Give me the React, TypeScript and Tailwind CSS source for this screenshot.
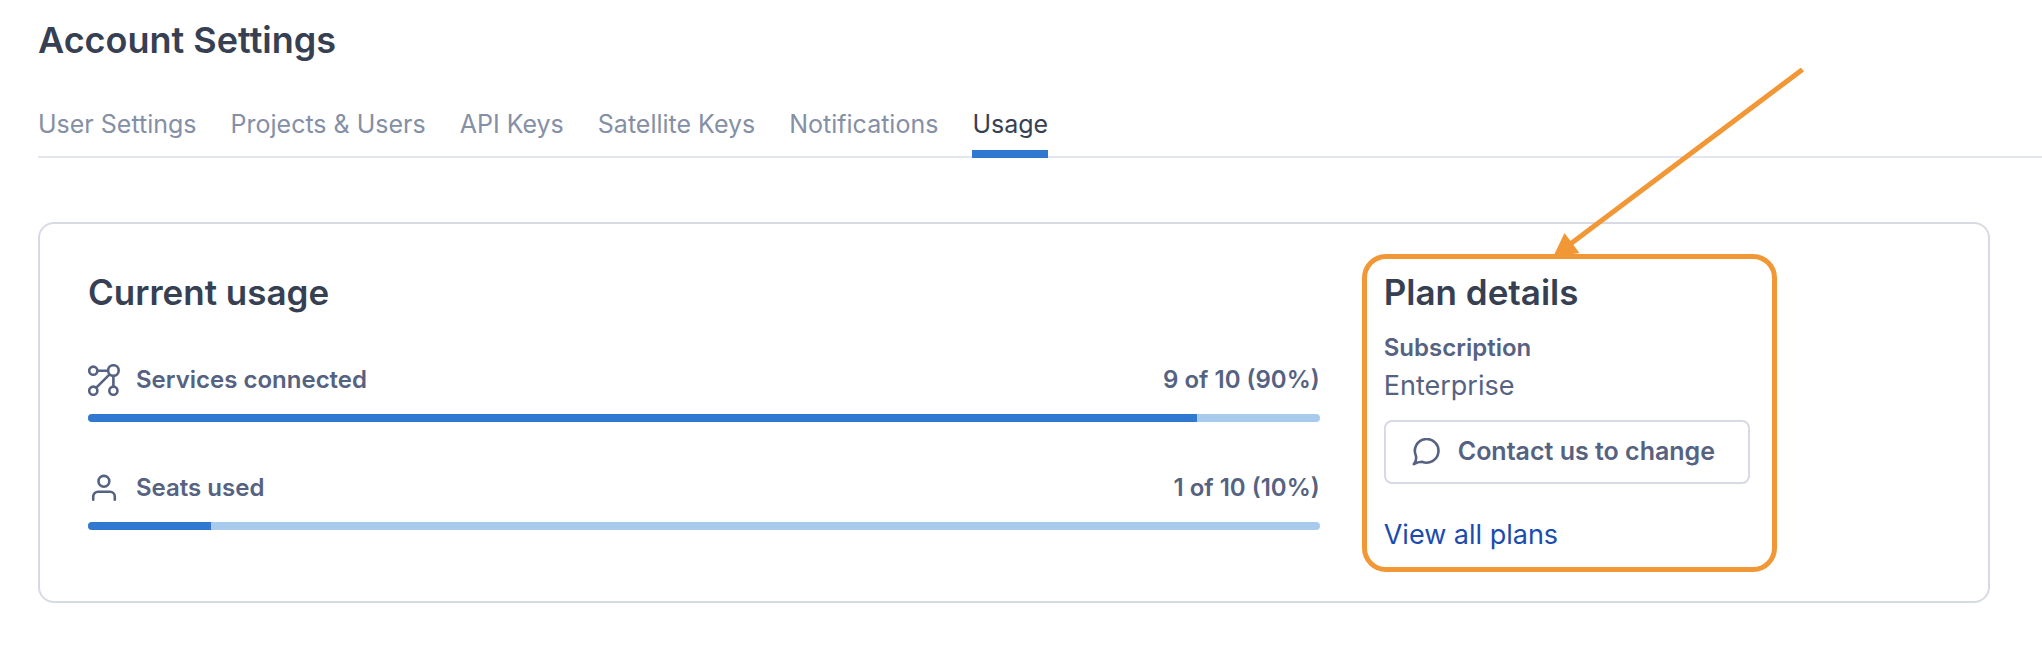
import React from "react";

const tabs = ["User Settings", "Projects & Users", "API Keys", "Satellite Keys", "Notifications", "Usage"];

function ServicesIcon() {
  return (
    <svg width="32" height="32" viewBox="0 0 32 32" fill="none" stroke="currentColor" strokeWidth="2.6" aria-hidden="true">
      <circle cx="5.3" cy="6.7" r="4.1" />
      <circle cx="25.4" cy="6.5" r="5.3" />
      <circle cx="5.3" cy="26.7" r="4.1" />
      <circle cx="25.4" cy="26.7" r="4.1" />
      <path d="M9.5 6.7H20M21.6 10.4L8.3 23.7M25.4 12v10.5" />
    </svg>
  );
}

function PersonIcon() {
  return (
    <svg width="32" height="32" viewBox="0 0 32 32" fill="none" stroke="currentColor" strokeWidth="2.6" strokeLinecap="round" aria-hidden="true">
      <circle cx="15.9" cy="9.3" r="5.4" />
      <path d="M5.2 27.8v-3.3a4.8 4.8 0 0 1 4.8-4.8h12a4.8 4.8 0 0 1 4.8 4.8v3.3" />
    </svg>
  );
}

function ChatIcon() {
  return (
    <svg width="28" height="28" viewBox="0 0 28 28" fill="none" stroke="currentColor" strokeWidth="2.6" strokeLinejoin="round" aria-hidden="true">
      <path d="M1.8 26.1Q5 22.500 3.900 17.700A11.800 11.800 0 1 1 10 23.700Q6 23.700 1.800 26.100Z" />
    </svg>
  );
}

function Meter({ icon, label, used, total }: { icon: React.ReactNode; label: string; used: number; total: number }) {
  const percent = (used / total) * 100;
  return (
    <div>
      <div className="flex h-8 items-center text-2xl font-semibold text-[#566281]">
        {icon}
        <span className="ml-4">{label}</span>
        <span className="ml-auto">{`${used} of ${total} (${percent}%)`}</span>
      </div>
      <div
        role="progressbar"
        aria-label={label}
        aria-valuenow={used}
        aria-valuemax={total}
        className="mt-[18px] h-2 overflow-hidden rounded-full bg-[#a8caec]"
      >
        <div className="h-full bg-[#3179d0]" style={{ width: `${percent}%` }} />
      </div>
    </div>
  );
}

function PlanHighlight() {
  return (
    <div className="pointer-events-none absolute -top-[18px] -right-[27px] -bottom-[19px] -left-[22px] rounded-3xl border-[5px] border-[#f29735]">
      <svg className="absolute -top-[191px] left-[184px]" width="256" height="192" viewBox="0 0 256 192" aria-hidden="true">
        <path d="M251.5 1.5L18 177" stroke="#f29735" strokeWidth="5" />
        <path d="M2 189L13.5 165L28.5 185Z" fill="#f29735" />
      </svg>
    </div>
  );
}

export default function App() {
  return (
    <div className="min-h-screen bg-white pb-16 pl-[38px] font-['Inter',sans-serif] text-[#373f52]">
      <header className="pt-4">
        <h1 className="text-4xl leading-[48px] font-semibold">Account Settings</h1>
        <nav aria-label="Account" className="mt-11 flex gap-[34px] border-b-2 border-[#e4e6ed] text-[25px] leading-8">
          {tabs.map((tab) => (
            <a
              key={tab}
              href="#"
              aria-current={tab === "Usage" ? "page" : undefined}
              className={
                tab === "Usage"
                  ? "-mb-0.5 border-b-8 border-[#3179d0] pb-2.5"
                  : "-mb-0.5 border-b-8 border-transparent pb-2.5 text-[#858fa5]"
              }
            >
              {tab}
            </a>
          ))}
        </nav>
      </header>

      <main className="mt-16 mr-[52px] grid grid-cols-[31fr_14fr] gap-16 rounded-2xl border-2 border-[#d7dae2] p-12">
        <section>
          <h2 className="text-[35px] leading-10 font-semibold">Current usage</h2>
          <div className="mt-[52px] flex flex-col gap-[50px]">
            <Meter icon={<ServicesIcon />} label="Services connected" used={9} total={10} />
            <Meter icon={<PersonIcon />} label="Seats used" used={1} total={10} />
          </div>
        </section>

        <aside>
          <div className="relative w-fit">
            <h2 className="text-[35px] leading-10 font-semibold">Plan details</h2>
            <h3 className="mt-5 text-2xl font-semibold text-[#566281]">Subscription</h3>
            <p className="mt-1.5 text-[27px] leading-8 text-[#566281]">Enterprise</p>
            <button
              type="button"
              className="mt-[18px] flex h-16 w-[366px] items-center gap-[18px] rounded-lg border-2 border-[#d7dae2] px-[26px] text-[25px] font-semibold whitespace-nowrap text-[#566281]"
            >
              <ChatIcon />
              Contact us to change
            </button>
            <a href="#" className="mt-[33px] block text-[27px] leading-9 text-[#1b4bae]">
              View all plans
            </a>
            <PlanHighlight />
          </div>
        </aside>
      </main>
    </div>
  );
}
